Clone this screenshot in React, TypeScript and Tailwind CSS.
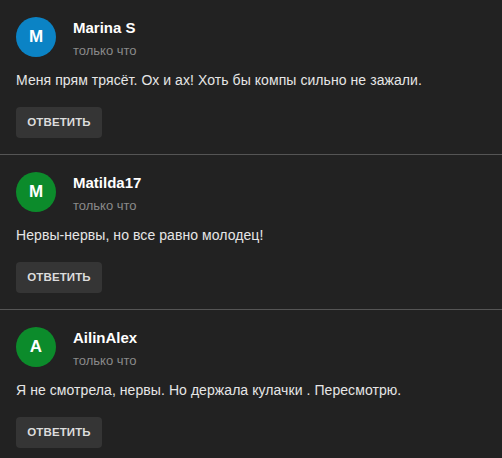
const comments = [
  { name: "Marina S", letter: "M", color: "bg-[#0b83c5]", text: "Меня прям трясёт. Ох и ах! Хоть бы компы сильно не зажали." },
  { name: "Matilda17", letter: "M", color: "bg-[#0c8b2b]", text: "Нервы-нервы, но все равно молодец!" },
  { name: "AilinAlex", letter: "A", color: "bg-[#0c8b2b]", text: "Я не смотрела, нервы. Но держала кулачки . Пересмотрю." },
];

function Comment({ name, letter, color, text, last }: { name: string; letter: string; color: string; text: string; last: boolean }) {
  return (
    <div className={`pl-4 pt-[17px] ${last ? "pb-[9px]" : "pb-4 border-b border-[#555]"}`}>
      <div className="flex items-start gap-[17px]">
        <div className={`w-10 h-10 rounded-full ${color} flex items-center justify-center text-white font-bold text-[17px]`}>
          {letter}
        </div>
        <div className="pt-[2px] pb-[2px]">
          <div className="text-white font-bold text-[15px] leading-[18px]">{name}</div>
          <div className="text-[#8a8a8a] text-[13px] leading-[16px] mt-[6px]">только что</div>
        </div>
      </div>
      <p className="text-[#e6e6e6] text-[14px] tracking-[0.07px] leading-[20px] mt-[9px] mb-[1px]">{text}</p>
      <button className="mt-[16px] h-[31px] w-[86px] rounded bg-[#353535] text-[#dcdcdc] font-bold text-[11.5px] tracking-[0.1px] uppercase">
        Ответить
      </button>
    </div>
  );
}

export default function App() {
  return (
    <div className="w-[502px] h-[458px] bg-[#222222] overflow-hidden font-['Liberation_Sans',Arial,sans-serif]">
      {comments.map((c, i) => (
        <Comment key={i} {...c} last={i === comments.length - 1} />
      ))}
    </div>
  );
}
